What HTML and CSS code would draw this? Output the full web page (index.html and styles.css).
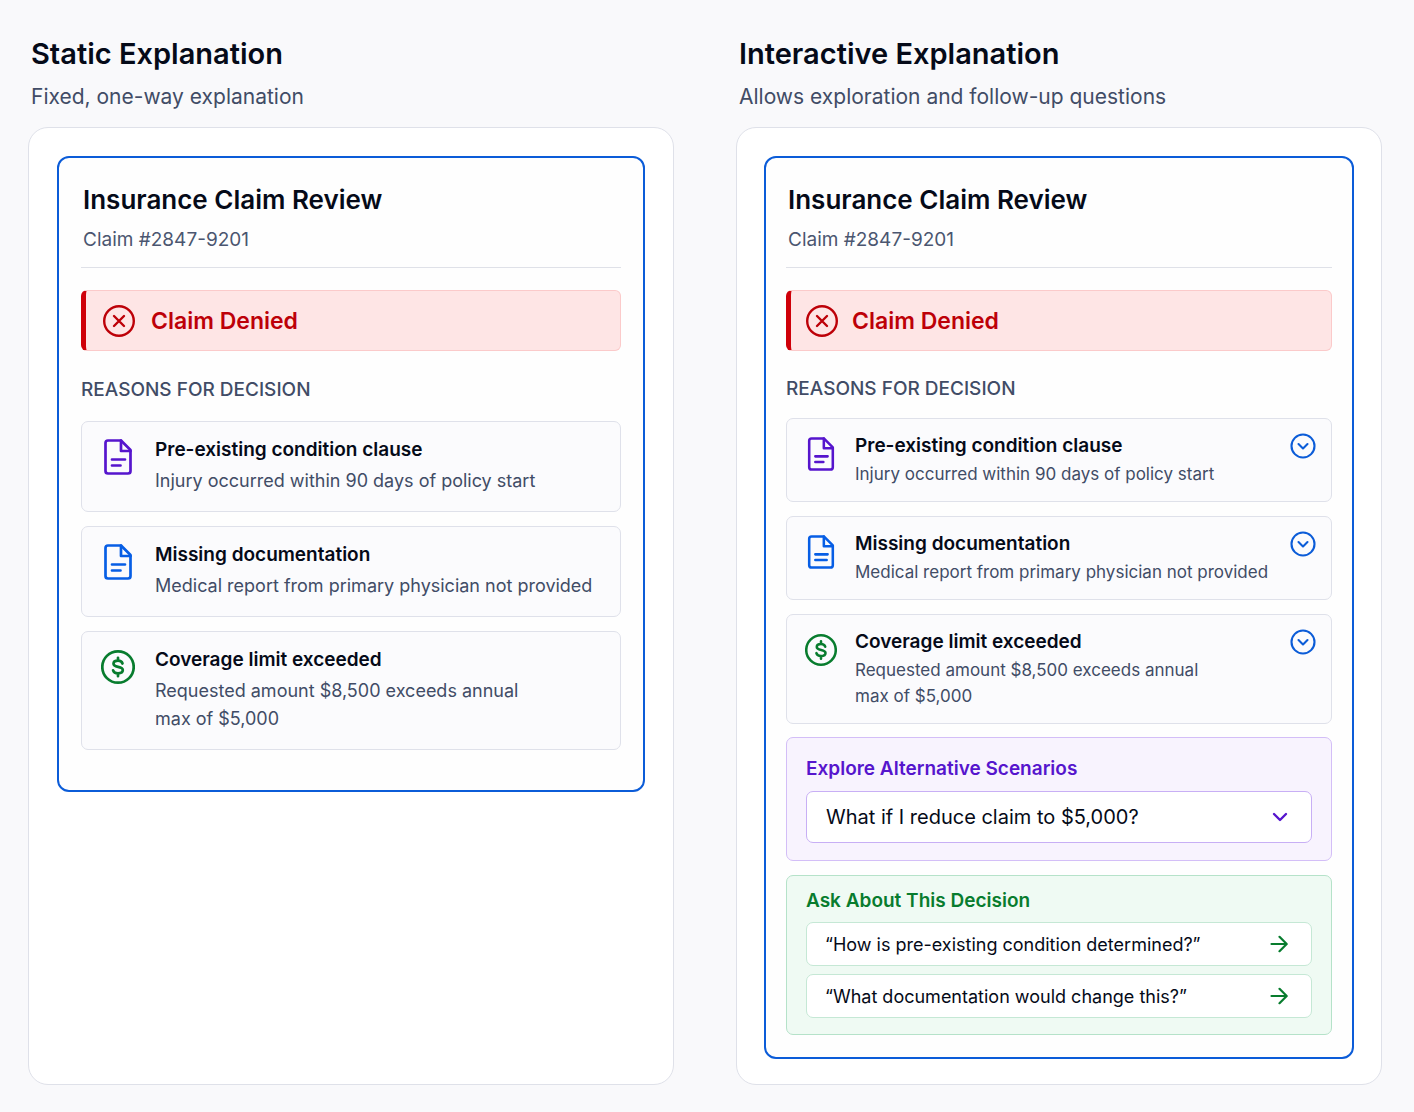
FILE: index.html
```html
<!DOCTYPE html>
<html lang="en">
<head>
<meta charset="utf-8">
<meta name="viewport" content="width=device-width, initial-scale=1">
<title>Static and Interactive Explanation</title>
<link rel="stylesheet" href="styles.css">
</head>
<body>
<svg class="sprite" aria-hidden="true">
  <symbol id="icon-denied" viewBox="0 0 32 32"><circle cx="16" cy="16" r="14.8"/><path d="M11 11l10 10M21 11L11 21"/></symbol>
  <symbol id="icon-doc-short" viewBox="0 0 28 36"><path d="M17 1.5H4A2.5 2.5 0 0 0 1.500 4v28A2.500 2.500 0 0 0 4 34.500h20a2.500 2.500 0 0 0 2.500-2.500V11z"/><path d="M17 1.500V12h9.500M8 20.500h13M8 26.500h8.500"/></symbol>
  <symbol id="icon-doc-long" viewBox="0 0 28 36"><path d="M17 1.500H4A2.500 2.500 0 0 0 1.500 4v28A2.500 2.500 0 0 0 4 34.500h20a2.500 2.500 0 0 0 2.500-2.500V11z"/><path d="M17 1.500V12h9.500M8 20.500h13M8 26.500h12"/></symbol>
  <symbol id="icon-dollar" viewBox="0 0 34 34"><circle cx="17" cy="17" r="15.700"/><path d="M21.500 13.500c-.6-1.900-2.300-2.800-4.500-2.800-2.600 0-4.500 1.200-4.500 3.100 0 4.300 9.300 1.900 9.300 6.300 0 2-2 3.200-4.800 3.200-2.500 0-4.300-1-4.900-3M17 7.800v2.900M17 23.300v2.900"/></symbol>
  <symbol id="icon-expand" viewBox="0 0 26 26"><circle cx="13" cy="13" r="11.500"/><path d="M8.500 11l4.500 4.500 4.500-4.500"/></symbol>
  <symbol id="icon-chevron" viewBox="0 0 16 10"><path d="M2 2l6 6 6-6"/></symbol>
  <symbol id="icon-arrow" viewBox="0 0 18 18"><path d="M1.500 9h15M9.500 1.800L16.700 9l-7.200 7.200"/></symbol>
</svg>

<main class="comparison">
  <section class="column">
    <header class="column-header">
      <h1>Static Explanation</h1>
      <p>Fixed, one-way explanation</p>
    </header>
    <div class="panel">
      <article class="claim">
        <header class="claim-header">
          <h2>Insurance Claim Review</h2>
          <p>Claim #2847-9201</p>
        </header>
        <div class="status"><svg class="status-icon"><use href="#icon-denied"/></svg><strong>Claim Denied</strong></div>
        <h3 class="label">REASONS FOR DECISION</h3>
        <ul class="reasons">
          <li class="reason">
            <svg class="reason-icon purple"><use href="#icon-doc-short"/></svg>
            <div class="reason-text"><h4>Pre-existing condition clause</h4><p>Injury occurred within 90 days of policy start</p></div>
          </li>
          <li class="reason">
            <svg class="reason-icon blue"><use href="#icon-doc-short"/></svg>
            <div class="reason-text"><h4>Missing documentation</h4><p>Medical report from primary physician not provided</p></div>
          </li>
          <li class="reason">
            <svg class="reason-icon green"><use href="#icon-dollar"/></svg>
            <div class="reason-text"><h4>Coverage limit exceeded</h4><p>Requested amount $8,500 exceeds annual<br>max of $5,000</p></div>
          </li>
        </ul>
      </article>
    </div>
  </section>

  <section class="column interactive">
    <header class="column-header">
      <h1>Interactive Explanation</h1>
      <p>Allows exploration and follow-up questions</p>
    </header>
    <div class="panel">
      <article class="claim">
        <header class="claim-header">
          <h2>Insurance Claim Review</h2>
          <p>Claim #2847-9201</p>
        </header>
        <div class="status"><svg class="status-icon"><use href="#icon-denied"/></svg><strong>Claim Denied</strong></div>
        <h3 class="label">REASONS FOR DECISION</h3>
        <ul class="reasons">
          <li class="reason">
            <svg class="reason-icon purple"><use href="#icon-doc-short"/></svg>
            <div class="reason-text"><h4>Pre-existing condition clause</h4><p>Injury occurred within 90 days of policy start</p></div>
            <button class="expand" type="button" aria-label="Expand pre-existing condition clause"><svg><use href="#icon-expand"/></svg></button>
          </li>
          <li class="reason">
            <svg class="reason-icon blue"><use href="#icon-doc-long"/></svg>
            <div class="reason-text"><h4>Missing documentation</h4><p>Medical report from primary physician not provided</p></div>
            <button class="expand" type="button" aria-label="Expand missing documentation"><svg><use href="#icon-expand"/></svg></button>
          </li>
          <li class="reason">
            <svg class="reason-icon green"><use href="#icon-dollar"/></svg>
            <div class="reason-text"><h4>Coverage limit exceeded</h4><p>Requested amount $8,500 exceeds annual<br>max of $5,000</p></div>
            <button class="expand" type="button" aria-label="Expand coverage limit exceeded"><svg><use href="#icon-expand"/></svg></button>
          </li>
        </ul>
        <section class="box scenarios">
          <label for="scenario">Explore Alternative Scenarios</label>
          <div class="select">
            <select id="scenario"><option>What if I reduce claim to $5,000?</option></select>
            <svg class="chevron"><use href="#icon-chevron"/></svg>
          </div>
        </section>
        <section class="box ask">
          <h3>Ask About This Decision</h3>
          <div class="questions">
            <button class="question" type="button">“How is pre-existing condition determined?”<svg><use href="#icon-arrow"/></svg></button>
            <button class="question" type="button">“What documentation would change this?”<svg><use href="#icon-arrow"/></svg></button>
          </div>
        </section>
      </article>
    </div>
  </section>
</main>
</body>
</html>
```
FILE: styles.css
```css
* { box-sizing: border-box; }

body {
  margin: 0;
  background: #f9f9fb;
  color: #050a18;
  font-family: Inter, "Liberation Sans", sans-serif;
}

h1, h2, h3, h4, p, ul { margin: 0; padding: 0; }
ul { list-style: none; }
button, select { font: inherit; color: inherit; cursor: pointer; }
svg { fill: none; stroke: currentColor; stroke-linecap: round; stroke-linejoin: round; }

.sprite { position: absolute; width: 0; height: 0; }

.comparison {
  display: grid;
  grid-template-columns: 1fr 1fr;
  gap: 62px;
  padding: 34px 32px 27px 28px;
}

.column { display: flex; flex-direction: column; min-width: 0; }
.column-header { padding: 0 3px 13px; }
h1 { font-size: 29px; line-height: 40px; font-weight: 600; }
.column-header p { margin-top: 6px; font-size: 21px; line-height: 34px; color: #414c66; }

.panel {
  flex: 1;
  padding: 28px 28px 25px;
  background: #fff;
  border: 1px solid #dfe1e9;
  border-radius: 20px;
}

.claim {
  padding: 22px 22px 40px;
  background: #fefefe;
  border: 2px solid #0b5cd8;
  border-radius: 12px;
}

.claim-header { padding: 0 2px 11px; border-bottom: 1px solid #dfe1e8; }
h2 { font-size: 26px; line-height: 40px; font-weight: 600; }
.claim-header p { margin-top: 4px; font-size: 19px; line-height: 32px; color: #4b5670; }

.status {
  display: flex;
  align-items: center;
  gap: 16px;
  height: 61px;
  margin-top: 22px;
  padding-left: 17px;
  background: #fee5e5;
  border: 1px solid #fbcaca;
  border-left: 5px solid #cf0009;
  border-radius: 6px;
  color: #bd0008;
  font-size: 23px;
}
.status strong { font-weight: 600; }
.status-icon { width: 32px; height: 32px; stroke-width: 2.4; }

.label {
  margin: 23px 0 15px;
  font-size: 19px;
  line-height: 32px;
  font-weight: 500;
  color: #414c66;
}

.reasons { display: flex; flex-direction: column; gap: 14px; }
.reason {
  display: flex;
  align-items: flex-start;
  gap: 20px;
  padding: 11px 16px 16px 19px;
  background: #fbfbfd;
  border: 1px solid #dfe1ea;
  border-radius: 7px;
}
.reason-icon { flex: none; width: 34px; height: 36px; margin-top: 6px; stroke-width: 2.7; }
.reason-text { flex: 1; min-width: 0; }
h4 { font-size: 19px; line-height: 34px; font-weight: 600; }
.reason-text p { font-size: 18px; line-height: 28px; color: #414c66; white-space: nowrap; }

.purple { color: #5615cd; }
.blue { color: #075ee5; }
.green { color: #087c2e; }

.interactive .panel { padding: 28px 27px 25px; }
.interactive .claim { padding: 22px 20px; }
.interactive .status { gap: 14px; padding-left: 15px; }
.interactive .label { margin: 22px 0 13px; }
.interactive .reason { gap: 18px; padding: 11px 15px 14px 18px; }
.interactive .reason-icon { width: 32px; height: 34px; margin-top: 7px; }
.interactive h4 { line-height: 31px; }
.interactive .reason-text p { font-size: 17px; line-height: 26px; }

.expand {
  display: flex;
  flex: none;
  margin-top: 3px;
  padding: 0;
  background: none;
  border: 0;
  color: #0b5cd8;
}
.expand svg { width: 26px; height: 26px; stroke-width: 2.1; }

.box { margin-top: 14px; border: 1px solid; border-radius: 7px; }
.box label, .box h3 { display: block; font-size: 19px; line-height: 30px; font-weight: 600; }

.scenarios { margin-top: 13px; padding: 16px 19px 17px; background: #f8f3fe; border-color: #d3bef7; }
.scenarios label { color: #5615cd; }
.select { position: relative; margin-top: 7px; }
.select select {
  display: block;
  width: 100%;
  height: 52px;
  padding: 0 48px 0 19px;
  appearance: none;
  background: #fff;
  border: 1px solid #c8aff5;
  border-radius: 7px;
  font-size: 20px;
}
.chevron {
  position: absolute;
  top: 21px;
  right: 24px;
  width: 16px;
  height: 10px;
  color: #5615cd;
  stroke-width: 2.4;
  pointer-events: none;
}

.ask { padding: 10px 19px 16px; background: #effaf3; border-color: #b5e2c9; }
.ask h3 { color: #087c2e; }
.questions { display: flex; flex-direction: column; gap: 8px; margin-top: 6px; }
.question {
  display: flex;
  align-items: center;
  justify-content: space-between;
  height: 44px;
  padding: 0 23px 0 18px;
  background: #fff;
  border: 1px solid #c5e8d5;
  border-radius: 7px;
  font-size: 18px;
  text-align: left;
  white-space: nowrap;
}
.question svg { width: 18px; height: 18px; color: #087c2e; stroke-width: 2.2; }
```
